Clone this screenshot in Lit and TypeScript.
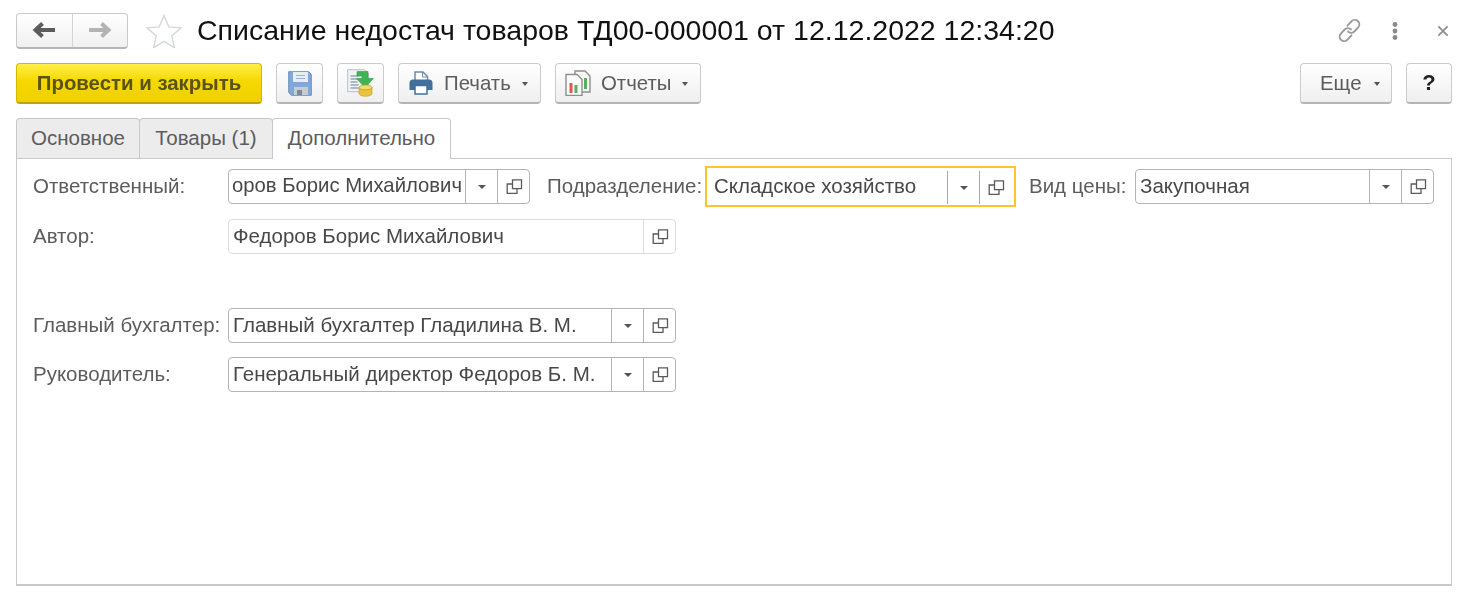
import { LitElement, html, css } from "lit";
import { customElement } from "lit/decorators.js";

const copyIcon = html`<svg class="ico" width="18" height="18" viewBox="0 0 18 18" fill="none" stroke="#5a5a5a" stroke-width="1.300"><path d="M7.500 1.800h9v8.800h-9z"/><path d="M7.500 6H2.200v9.300h9.800v-4.700"/></svg>`;
const caret = html`<span class="caret"></span>`;

@customElement("app-root")
export class AppRoot extends LitElement {
  static styles = css`
    :host { display: block; width: 1470px; height: 602px; background: #fff; font-family: "Liberation Sans", Arial, sans-serif; color: #4d4d4d; overflow: hidden; }
    * { box-sizing: border-box; }
    .page { padding: 13px 18px 0 16px; height: 602px; filter: blur(0.45px); }
    .head { display: flex; align-items: center; height: 35px; }
    .nav { display: flex; width: 112px; height: 36px; border: 1px solid #c9c9c9; border-bottom: 2px solid #b5b5b5; border-radius: 4px; background: linear-gradient(#fff, #f0f0f0); }
    .nav div { flex: 1; display: flex; align-items: center; justify-content: center; }
    .nav div + div { border-left: 1px solid #d4d4d4; }
    .star { margin-left: 18px; display: block; }
    h1 { margin: 0 0 0 15px; font-weight: 400; font-size: 28.500px; line-height: 35px; color: #111; white-space: nowrap; flex: 1; }
    .tools { display: flex; align-items: center; padding-right: 3px; }
    .dots { margin: 0 39px 0 30px; }
    .toolbar { display: flex; margin-top: 15px; height: 41px; gap: 14px; }
    .btn { height: 41px; border: 1px solid #cbcbcb; border-bottom: 2px solid #b5b5b5; border-radius: 4px; background: linear-gradient(#fff, #efefef); display: flex; align-items: center; font-size: 20.400px; color: #5c5c5c; white-space: nowrap; }
    .primary { width: 246px; justify-content: center; font-weight: 700; color: #5a5414; background: linear-gradient(#fff04a, #f5d800 45%, #f0d000); border: 1px solid #d4b800; border-bottom: 2px solid #bda400; }
    .square { width: 47px; justify-content: center; }
    .print { width: 143px; padding-left: 10px; }
    .rep { width: 146px; padding-left: 9px; }
    .print span.t { margin-left: 11px; }
    .rep span.t { margin-left: 10px; }
    .caret { display: inline-block; width: 0; height: 0; border: 3.500px solid transparent; border-top: 4px solid #555; border-bottom: 0; }
    .btn .caret { margin-left: 11px; margin-top: 2px; }
    .b .caret { border-width: 4px 4px 0; }
    .spacer { flex: 1; }
    .more { width: 92px; padding-left: 19px; }
    .more .caret { margin-left: 12px; }
    .help { width: 46px; justify-content: center; color: #222; font-size: 22px; font-weight: 700; }
    .tabs { display: flex; margin-top: 14px; height: 41px; position: relative; z-index: 1; }
    .tab { height: 40px; padding-bottom: 2px; display: flex; align-items: center; justify-content: center; font-size: 20.500px; background: #ececec; border: 1px solid #c8c8c8; border-bottom: 0; border-radius: 4px 4px 0 0; color: #5c5c5c; }
    .tab + .tab { margin-left: -1px; }
    .t1 { width: 124px; }
    .t2 { width: 134px; }
    .t3 { width: 179px; height: 41px; background: #fff; padding-bottom: 3px; }
    .panel { margin-top: -1px; height: 428px; border: 1px solid #cacaca; border-bottom: 2px solid #c8c8c8; padding: 10px 0 0 16px; }
    .row { display: flex; align-items: center; font-size: 20.500px; height: 35px; }
    .row1 { margin-bottom: 15px; }
    .row2 { margin-bottom: 54px; }
    .row3 { margin-bottom: 14px; }
    .label { width: 195px; padding-bottom: 2px; white-space: nowrap; color: #5c5c5c; flex: none; }
    .field { display: flex; height: 35px; border: 1px solid #b3b3b3; border-radius: 4px; background: #fff; color: #484848; flex: none; }
    .field.dim { border-color: #dcdcdc; }
    .val { flex: 1; min-width: 0; overflow: hidden; white-space: nowrap; line-height: 31px; padding-left: 4px; }
    .f1 .val { padding-left: 3px; font-size: 20.300px; }
    .b { width: 32px; display: flex; align-items: center; justify-content: center; border-left: 1px solid #b3b3b3; flex: none; }
    .dim .b { border-left-color: #dcdcdc; }
    .focus { width: 311px; height: 41px; border: 2px solid #fbc52c; border-radius: 0; padding: 3px 3px 3px 0; }
    .focus .val { padding-left: 7px; line-height: 29px; }
    .focus .b { height: 33px; border-left-color: #aaa; }
    .lbl2 { margin: 0 4px 0 17px; width: 154px; padding-bottom: 2px; color: #5c5c5c; white-space: nowrap; flex: none; }
    .lbl3 { margin: 0 9px 0 13px; width: 97px; padding-bottom: 2px; color: #5c5c5c; white-space: nowrap; flex: none; }
    .f1 { width: 302px; } .f2 { width: 299px; } .f3 { width: 448px; }
  `;

  field(cls: string, value: string, drop = true) {
    return html`<div class="field ${cls}"><div class="val">${value}</div>${drop ? html`<div class="b">${caret}</div>` : ""}<div class="b">${copyIcon}</div></div>`;
  }

  render() {
    return html`<div class="page">
      <div class="head">
        <div class="nav">
          <div><svg width="24" height="18" viewBox="0 0 24 18" fill="none" stroke="#5c5c5c" stroke-width="4"><path d="M23 9H4"/><path d="M10.500 2.500L3.500 9l7 6.500"/></svg></div>
          <div><svg width="24" height="18" viewBox="0 0 24 18" fill="none" stroke="#b4b4b4" stroke-width="4"><path d="M1 9h19"/><path d="M13.500 2.500l7 6.500-7 6.500"/></svg></div>
        </div>
        <svg class="star" width="36" height="34" viewBox="0 0 36 34"><path d="M18 1.500l4.800 11.400 12.200 1-9.300 8 2.900 12-10.600-6.500L7.400 33.900l2.900-12-9.300-8 12.200-1z" fill="#fff" stroke="#d3d8de" stroke-width="1.400"/></svg>
        <h1>Списание недостач товаров ТД00-000001 от 12.12.2022 12:34:20</h1>
        <div class="tools">
          <svg width="25" height="25" viewBox="0 0 26 26" fill="none" stroke="#9a9a9a" stroke-width="2" stroke-linecap="round"><path d="M11 8l4-4.500a4.700 4.700 0 0 1 7 6.300l-4 4.200a4.700 4.700 0 0 1-6.500 0"/><path d="M15 18l-4 4.500a4.700 4.700 0 0 1-7-6.300l4-4.200a4.700 4.700 0 0 1 6.500 0"/></svg>
          <svg class="dots" width="6" height="20" viewBox="0 0 6 20" fill="#8a8a8a"><circle cx="3" cy="3.500" r="2.400"/><circle cx="3" cy="10" r="2.400"/><circle cx="3" cy="16.500" r="2.400"/></svg>
          <svg width="12" height="12" viewBox="0 0 13 13" stroke="#8f8f8f" stroke-width="2"><path d="M1.500 1.500l10 10M11.500 1.500l-10 10"/></svg>
        </div>
      </div>
      <div class="toolbar">
        <div class="btn primary">Провести и закрыть</div>
        <div class="btn square"><svg width="24" height="25" viewBox="0 0 24 25"><path d="M.7.700h20l2.600 2.600v21H3.500L.7 21.500z" fill="#80a8d8" stroke="#6a90be"/><path d="M5 1h15v10H5z" fill="#e6edf4"/><path d="M8 4.500h9M8 7.500h9" stroke="#9db4cb" stroke-width="1.200"/><path d="M6 16h14v8H6z" fill="#c9ccce"/><path d="M9 19h5v5H9z" fill="#7c8a98"/></svg></div>
        <div class="btn square"><svg width="28" height="28" viewBox="0 0 28 28"><path d="M.7.700h17l4 4v18H.7z" fill="#f0f3f5" stroke="#b9bfc4"/><path d="M3.500 7h8M3.500 10h7M3.500 13h7M3.500 16h8M3.500 19h8" stroke="#95a8b8" stroke-width="1.300"/><path d="M10 2.500h11v7h5.500L18 18.500 9.500 9.500H15V7h-5z" fill="#3cb552" stroke="#2e9a45" stroke-width=".6"/><ellipse cx="18.500" cy="18.500" rx="6.500" ry="2.500" fill="#f5dc6a" stroke="#c2a232" stroke-width=".7"/><path d="M12 18.500v6c0 1.400 2.900 2.800 6.500 2.800s6.500-1.400 6.500-2.800v-6c0 1.400-2.900 2.500-6.500 2.500s-6.500-1.100-6.500-2.500z" fill="#edc23e" stroke="#c2a232" stroke-width=".7"/></svg></div>
        <div class="btn print"><svg width="24" height="24" viewBox="0 0 24 24"><path d="M6 1h8l4.500 4.500V10H6z" fill="#fff" stroke="#6f8aa5" stroke-width="1.500"/><path d="M13.500 1v5h5" fill="none" stroke="#6f8aa5"/><path d="M.5 12a3.500 3.500 0 0 1 3.500-3.500h16a3.500 3.500 0 0 1 3.500 3.500v7H.5z" fill="#436f9b"/><path d="M6 14.500h12v8.500H6z" fill="#fff" stroke="#436f9b" stroke-width="1.500"/></svg><span class="t">Печать</span>${caret}</div>
        <div class="btn rep"><svg width="26" height="26" viewBox="0 0 26 26"><path d="M10 1h10l5 5v16H10z" fill="#f8f8f8" stroke="#8e8e8e" stroke-width="1.400"/><path d="M1 4.500h11l5 5v16H1z" fill="#fbfbfb" stroke="#8e8e8e" stroke-width="1.400"/><path d="M4.500 13h3v10h-3z" fill="#e0584c"/><path d="M9.500 15h3v8h-3z" fill="#58b05a"/><path d="M19 8h3v11h-3z" fill="#58b05a"/></svg><span class="t">Отчеты</span>${caret}</div>
        <div class="spacer"></div>
        <div class="btn more">Еще${caret}</div>
        <div class="btn help">?</div>
      </div>
      <div class="tabs">
        <div class="tab t1">Основное</div>
        <div class="tab t2">Товары (1)</div>
        <div class="tab t3">Дополнительно</div>
      </div>
      <div class="panel">
        <div class="row row1">
          <div class="label">Ответственный:</div>
          ${this.field("f1", "оров Борис Михайлович")}
          <div class="lbl2">Подразделение:</div>
          ${this.field("focus", "Складское хозяйство")}
          <div class="lbl3">Вид цены:</div>
          ${this.field("f2", "Закупочная")}
        </div>
        <div class="row row2">
          <div class="label">Автор:</div>
          ${this.field("f3 dim", "Федоров Борис Михайлович", false)}
        </div>
        <div class="row row3">
          <div class="label">Главный бухгалтер:</div>
          ${this.field("f3", "Главный бухгалтер Гладилина В. М.")}
        </div>
        <div class="row">
          <div class="label">Руководитель:</div>
          ${this.field("f3", "Генеральный директор Федоров Б. М.")}
        </div>
      </div>
    </div>`;
  }
}
